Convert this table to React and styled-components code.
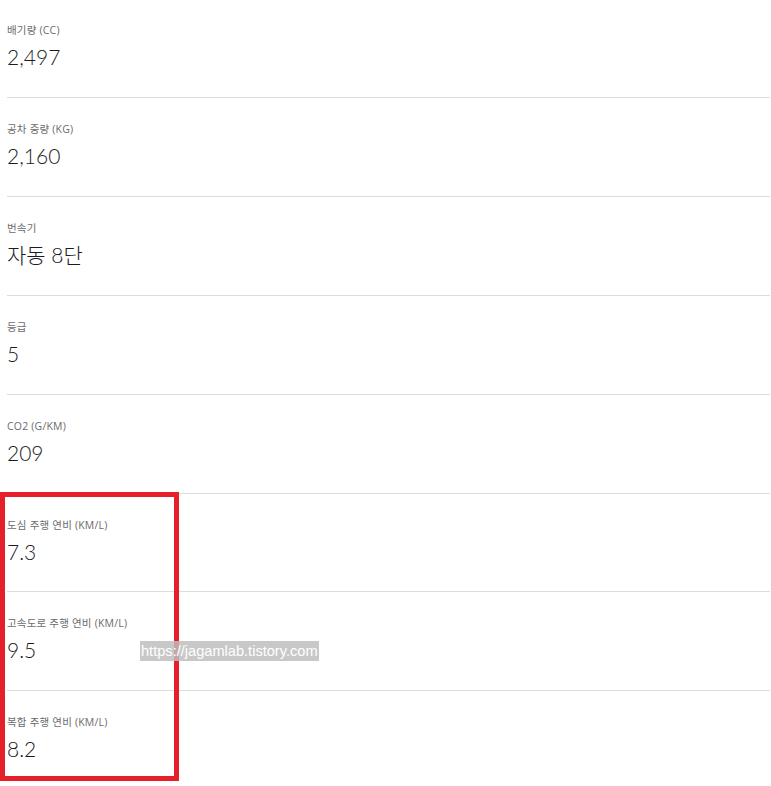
import React from "react";
import styled, { createGlobalStyle } from "styled-components";

const Global = createGlobalStyle`
  html, body { margin: 0; padding: 0; background: #fff; }
  body { font-family: "Lato", "Noto Sans CJK KR", sans-serif; }
`;

const Page = styled.div`
  position: relative;
  width: 771px;
  height: 786px;
  overflow: hidden;
  background: #fff;
`;

const List = styled.div`
  display: flex;
  flex-direction: column;
  margin-top: -1px;
  padding: 0 1px 0 7px;
`;

const Row = styled.div`
  display: flex;
  flex-direction: column;
  gap: 6px;
  height: ${(p) => p.$h}px;
  box-sizing: border-box;
  padding-top: 24px;
  border-bottom: ${(p) => (p.$last ? "none" : "1px solid #dcdcdc")};
`;

const Label = styled.div`
  font-family: "Open Sans", "Noto Sans CJK KR", sans-serif;
  font-size: 10.5px;
  line-height: 14px;
  letter-spacing: 0.2px;
  color: #6b6b6b;
  font-weight: 400;
`;

const Value = styled.div`
  font-family: "Lato", "Noto Sans CJK KR", sans-serif;
  font-size: 21px;
  line-height: 28px;
  color: #1c1c1c;
  font-weight: 300;
`;

const Highlight = styled.div`
  position: absolute;
  left: 0;
  top: 492px;
  width: 179px;
  height: 289px;
  box-sizing: border-box;
  border: 5px solid #e5202a;
  pointer-events: none;
`;

const Watermark = styled.div`
  position: absolute;
  left: 140px;
  top: 641px;
  height: 20px;
  padding: 0 1px;
  background: rgba(190, 190, 190, 0.85);
  color: #fff;
  font-family: "Liberation Sans", "Noto Sans", sans-serif;
  font-size: 14.6px;
  line-height: 20px;
`;

const specs = [
  ["배기량 (CC)", "2,497", 99],
  ["공차 중량 (KG)", "2,160", 99],
  ["번속기", "자동 8단", 99],
  ["등급", "5", 99],
  ["CO2 (G/KM)", "209", 99],
  ["도심 주행 연비 (KM/L)", "7.3", 98],
  ["고속도로 주행 연비 (KM/L)", "9.5", 99],
  ["복합 주행 연비 (KM/L)", "8.2", 99],
];

export default function App() {
  return (
    <Page>
      <Global />
      <List>
        {specs.map(([label, value, h], i) => (
          <Row key={label} $h={h} $last={i === specs.length - 1}>
            <Label>{label}</Label>
            <Value>{value}</Value>
          </Row>
        ))}
      </List>
      <Highlight />
      <Watermark>https://jagamlab.tistory.com</Watermark>
    </Page>
  );
}
